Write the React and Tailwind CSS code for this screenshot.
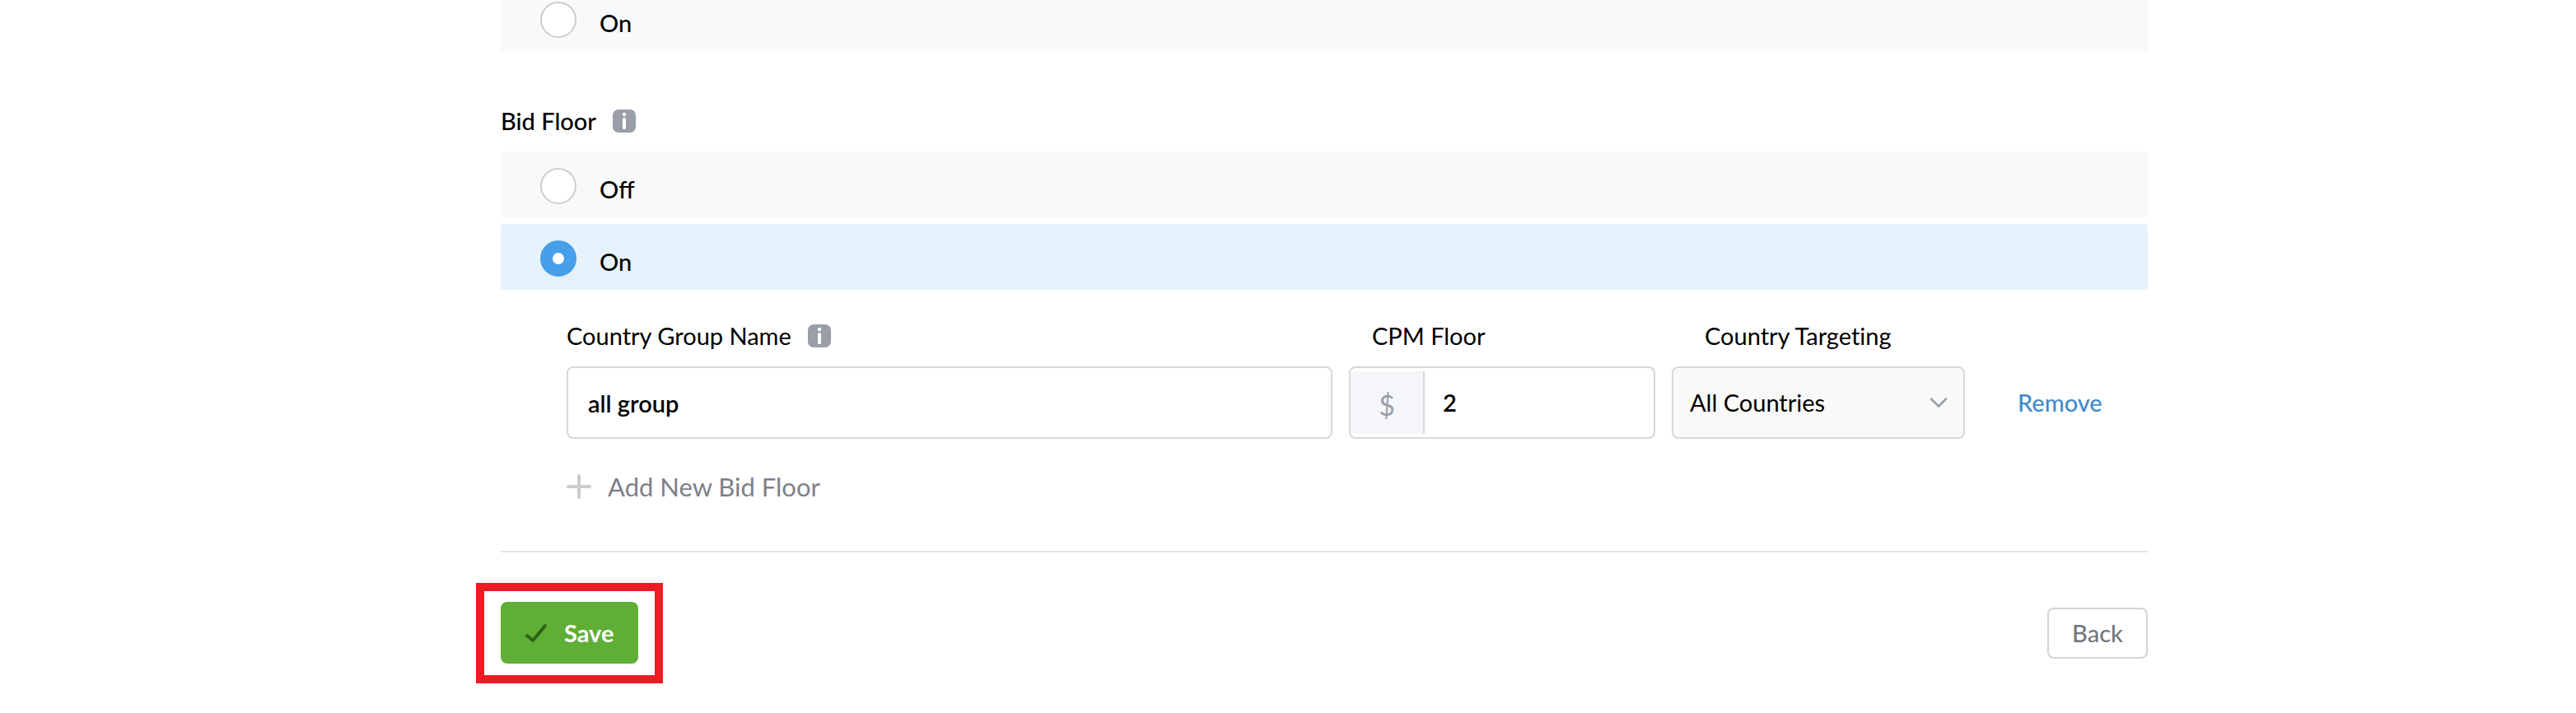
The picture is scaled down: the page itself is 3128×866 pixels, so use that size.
import { useState } from "react";

function InfoIcon() {
  return (
    <svg className="size-7 shrink-0" viewBox="0 0 28 28" role="img" aria-label="More information">
      <rect width="28" height="28" rx="7" fill="#999ea8" />
      <circle cx="14" cy="6" r="2.2" fill="#fff" />
      <rect x="12" y="10" width="4" height="14" rx="1.6" fill="#fff" />
    </svg>
  );
}

function RadioRow({ name, label, checked, onChange }) {
  return (
    <label
      className={
        "flex h-20 items-center rounded-sm pl-12 pt-1 text-[29px] leading-9 font-medium [font-variant-ligatures:normal] " +
        (checked ? "bg-[#e5f2fc]" : "bg-[#f8f9fb]")
      }
    >
      <input
        type="radio"
        name={name}
        checked={checked}
        onChange={onChange}
        className="mr-7 size-11 shrink-0 appearance-none rounded-full border-2 border-[#cccccc] bg-white checked:border-[15px] checked:border-[#459fe9]"
      />
      <span className="pt-2">{label}</span>
    </label>
  );
}

const field = "h-[88px] w-full min-w-0 rounded-lg border-2 border-[#d8d8d8] outline-none";

export default function App() {
  const [bidFloor, setBidFloor] = useState("on");
  const [previous, setPrevious] = useState("off");
  const [group, setGroup] = useState("all group");
  const [cpm, setCpm] = useState("2");

  return (
    <main className="-mt-[18px] bg-white pr-[520px] pb-9 pl-[608px] font-['Lato',sans-serif] text-black [font-variant-ligatures:none]">
      <RadioRow name="previous" label="On" checked={previous === "on"} onChange={() => setPrevious("on")} />

      <section className="pt-[67px]">
        <h2 className="flex h-9 items-center gap-5 text-[29px] leading-9 font-medium">
          Bid Floor <InfoIcon />
        </h2>
        <div className="mt-[19px] flex flex-col gap-2">
          <RadioRow name="bid-floor" label="Off" checked={bidFloor === "off"} onChange={() => setBidFloor("off")} />
          <RadioRow name="bid-floor" label="On" checked={bidFloor === "on"} onChange={() => setBidFloor("on")} />
        </div>

        <div className="pt-[38px] pl-20">
          <div className="grid grid-cols-[930fr_372fr_356fr_202fr] gap-x-5 gap-y-[19px]">
            <div className="flex h-9 items-center gap-5 text-[29px] leading-9">
              <label htmlFor="group">Country Group Name</label>
              <InfoIcon />
            </div>
            <label htmlFor="cpm" className="pl-7 text-[29px] leading-9">CPM Floor</label>
            <label htmlFor="targeting" className="col-span-2 pl-10 text-[29px] leading-9">Country Targeting</label>

            <input
              id="group"
              type="text"
              value={group}
              onChange={(e) => setGroup(e.target.value)}
              className={field + " px-6 text-[29px] font-semibold"}
            />
            <div className={field + " flex py-1"}>
              <span className="flex w-[90px] shrink-0 items-center justify-center rounded-l-md border-r-2 border-[#d8d8d8] bg-[#f5f6f9] pt-1 text-[34px] text-[#999ea8]">
                $
              </span>
              <input
                id="cpm"
                type="text"
                value={cpm}
                onChange={(e) => setCpm(e.target.value)}
                className="min-w-0 flex-1 pr-4 pl-[22px] text-[29px] font-semibold outline-none"
              />
            </div>
            <div className="relative">
              <select id="targeting" className={field + " appearance-none bg-[#f9f9f9] pr-14 pl-5 text-[29px]"}>
                <option>All Countries</option>
              </select>
              <svg className="pointer-events-none absolute top-[38px] right-[21px] h-3 w-[22px]" viewBox="0 0 22 12" fill="none" stroke="#999ea8" strokeWidth="2.5" strokeLinecap="round" strokeLinejoin="round">
                <path d="M2 1.5 11 10.5 20 1.5" />
              </svg>
            </div>
            <a href="#remove" className="self-center pl-11 text-[29px] leading-9 font-medium text-[#428bca]">Remove</a>
          </div>

          <button type="button" className="mt-10 flex items-center gap-5 text-[31px] leading-9 text-[#7d8088]">
            <svg className="size-[30px]" viewBox="0 0 30 30" fill="none" stroke="#cccccc" strokeWidth="4" strokeLinecap="round">
              <path d="M15 2v26M2 15h26" />
            </svg>
            Add New Bid Floor
          </button>
        </div>
      </section>

      <footer className="mt-[60px] flex items-center justify-between border-t-2 border-[#e2e3e4] pt-[60px]">
        <div className="relative">
          <button type="button" className="flex h-[75px] items-center gap-5 rounded-lg bg-[#5faf36] pr-[30px] pl-[29px] text-[29px] leading-9 font-bold text-white">
            <svg className="h-6 w-7" viewBox="0 0 28 24" fill="none" stroke="#2e6318" strokeWidth="4" strokeLinecap="round" strokeLinejoin="round">
              <path d="M3 15 10 21 25 3" />
            </svg>
            Save
          </button>
          <div className="pointer-events-none absolute -inset-x-[30px] -top-[23px] -bottom-6 border-10 border-[#ec1c24]" />
        </div>
        <button type="button" className="h-[62px] rounded-lg border-2 border-[#d3d4d5] bg-white px-7 text-[29px] leading-9 font-medium text-[#73787f]">
          Back
        </button>
      </footer>
    </main>
  );
}
